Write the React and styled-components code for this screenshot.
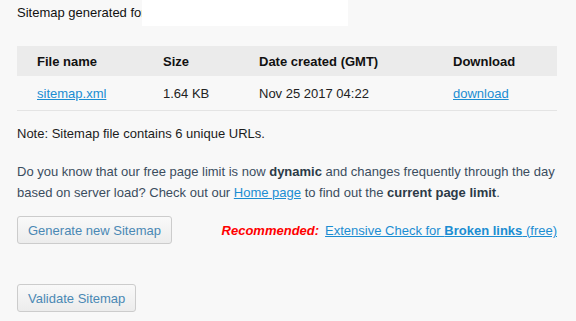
import React from 'react';
import styled, { createGlobalStyle } from 'styled-components';

const GlobalStyle = createGlobalStyle`
  html, body {
    margin: 0;
    padding: 0;
    background: #f8f8f8;
    font-family: "Liberation Sans", Arial, sans-serif;
    font-size: 13px;
    color: #222;
  }
`;

const Page = styled.div`
  width: 540px;
  padding: 0 19px 0 17px;
`;

const TopBar = styled.div`
  position: relative;
  height: 26px;
  line-height: 26px;
  white-space: nowrap;
  color: #111;
`;

// white input box laid over the end of the heading text
const Overlay = styled.div`
  position: absolute;
  top: 0;
  left: 125px;
  width: 206px;
  height: 26px;
  background: #fff;
`;

const Table = styled.table`
  width: 100%;
  margin-top: 20px;
  border-collapse: collapse;
`;

const Th = styled.th`
  width: ${p => p.w}px;
  height: 30px;
  padding: 0 0 0 20px;
  background: #ebebeb;
  text-align: left;
  font-weight: bold;
  color: #111;
`;

const Td = styled.td`
  height: 34px;
  padding: 0 0 0 20px;
  border-bottom: 1px solid #e4e4e4;
  color: #222;
`;

const Link = styled.a`
  color: #1b8dd2;
  text-decoration: underline;
  cursor: pointer;
`;

const Note = styled.p`
  margin: 12px 0 0;
  line-height: 21px;
  color: #1c1c1c;
`;

const Info = styled.p`
  margin: 17px 0 0;
  line-height: 21px;
  color: #3b4d5e;

  b {
    color: #2c3a47;
  }
`;

const ActionRow = styled.div`
  display: flex;
  align-items: center;
  justify-content: space-between;
  margin-top: 13px;
`;

const Button = styled.button`
  height: 28px;
  padding: 0 10px;
  border: 1px solid #cccccc;
  border-radius: 3px;
  background: linear-gradient(#f9f9f9, #ececec);
  font-family: inherit;
  font-size: 13px;
  color: #4a88b4;
  cursor: pointer;
`;

const Recommend = styled.div`
  white-space: nowrap;
`;

const Red = styled.span`
  color: #ff0000;
  font-weight: bold;
  font-style: italic;
  margin-right: 6px;
`;

const ValidateWrap = styled.div`
  margin-top: 40px;
`;

export default function App() {
  return (
    <>
      <GlobalStyle />
      <Page>
        <TopBar>
          Sitemap generated for your website
          <Overlay />
        </TopBar>

        <Table>
          <thead>
            <tr>
              <Th w={106}>File name</Th>
              <Th w={76}>Size</Th>
              <Th w={174}>Date created (GMT)</Th>
              <Th w={104}>Download</Th>
            </tr>
          </thead>
          <tbody>
            <tr>
              <Td><Link>sitemap.xml</Link></Td>
              <Td>1.64 KB</Td>
              <Td>Nov 25 2017 04:22</Td>
              <Td><Link>download</Link></Td>
            </tr>
          </tbody>
        </Table>

        <Note>Note: Sitemap file contains 6 unique URLs.</Note>

        <Info>
          Do you know that our free page limit is now <b>dynamic</b> and changes frequently through the day
          based on server load? Check out our <Link>Home page</Link> to find out the <b>current page limit</b>.
        </Info>

        <ActionRow>
          <Button>Generate new Sitemap</Button>
          <Recommend>
            <Red>Recommended:</Red>
            <Link>Extensive Check for <b>Broken links</b> (free)</Link>
          </Recommend>
        </ActionRow>

        <ValidateWrap>
          <Button>Validate Sitemap</Button>
        </ValidateWrap>
      </Page>
    </>
  );
}
